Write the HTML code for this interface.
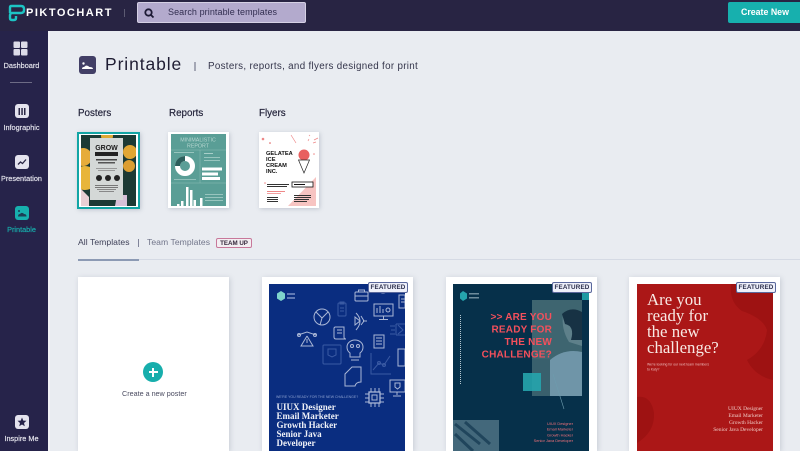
<!DOCTYPE html>
<html><head><meta charset="utf-8">
<style>
html,body{margin:0;padding:0;background:#e9ecf1}
body{width:800px;height:451px;overflow:hidden;position:relative;font-family:"Liberation Sans",sans-serif}
.a{position:absolute}
.t{position:absolute;white-space:nowrap}
.card{position:absolute;top:277px;width:151px;height:174px;background:#fff;box-shadow:1px 1px 5px rgba(120,130,150,.3)}
.badge{position:absolute;top:282px;width:38px;height:9px;background:#eef0fa;border:1px solid #5a689c;border-radius:2px;font:bold 6.300px/9px "Liberation Sans",sans-serif;color:#2a2d4a;text-align:center;letter-spacing:.15px}
.side{position:absolute;left:0;width:43px;text-align:center;font-size:7.300px;line-height:10px;color:#e8e8f0;white-space:nowrap;-webkit-text-stroke:.15px #e8e8f0}
.ic{position:absolute;width:14px;height:14px;background:#e4e3ee;border-radius:3px;left:15px}
svg.b{filter:blur(.35px)}
</style></head><body>
<div class="a" style="left:0;top:0;width:800px;height:31px;background:#282443"></div>
<div class="a" style="left:0;top:31px;width:48px;height:420px;background:#26234a"></div>
<div class="a" style="left:48px;top:31px;width:2px;height:420px;background:#f1f3f6"></div>

<svg class="a" style="left:8px;top:4px" width="18" height="18" viewBox="0 0 18 18" fill="none" stroke="#1dc4c4" stroke-width="2.400"><path d="M2 9V3.500Q2 2 3.500 2H13Q16 2 16 5V6Q16 9 13 9H4Q2 9 2 11.500V14Q2 16 4 16H6Q8 16 8 14V12"/></svg>
<div class="t" style="left:26px;top:5px;font:bold 11px/16px 'Liberation Sans',sans-serif;color:#fff;letter-spacing:1.5px">PIKTOCHART</div>
<div class="a" style="left:124px;top:9px;width:1px;height:8px;background:#5c5a72"></div>
<div class="a" style="left:137px;top:2px;width:169px;height:21px;box-sizing:border-box;background:#b3aacd;border:.5px solid #d5d0e4;border-radius:2px"></div>
<svg class="a" style="left:143px;top:7px" width="12" height="12" viewBox="0 0 12 12" fill="none" stroke="#1d1a35" stroke-width="1.800"><circle cx="5.500" cy="5.500" r="3.200"/><path d="M8 8l2.500 2.500"/></svg>
<div class="t" style="left:168px;top:5px;font-size:9px;line-height:14px;color:#322e50;letter-spacing:.08px">Search printable templates</div>
<div class="a" style="left:728px;top:2px;width:72px;height:21px;background:#17b0ae;border-radius:2px 0 0 2px"></div>
<div class="t" style="left:741px;top:5px;font:bold 8.800px/14px 'Liberation Sans',sans-serif;color:#fff">Create New</div>

<!-- sidebar -->
<svg class="a" style="left:13px;top:41px" width="15" height="15" viewBox="0 0 15 15"><g fill="#dcdbe8"><rect x="0.500" y="0.500" width="6.500" height="6.500" rx="1"/><rect x="8" y="0.500" width="6.500" height="6.500" rx="1"/><rect x="0.500" y="8" width="6.500" height="6.500" rx="1"/><rect x="8" y="8" width="6.500" height="6.500" rx="1"/></g></svg>
<div class="side" style="top:61px">Dashboard</div>
<div class="a" style="left:10px;top:82px;width:22px;height:1px;background:#6d6b85"></div>

<div class="ic" style="top:104px"></div>
<svg class="a" style="left:15px;top:104px" width="14" height="14" viewBox="0 0 14 14"><g fill="#2a2745"><rect x="3.500" y="4" width="1.500" height="7"/><rect x="6.300" y="4" width="1.500" height="7"/><rect x="9" y="4" width="1.500" height="7"/></g></svg>
<div class="side" style="top:123px">Infographic</div>

<div class="ic" style="top:155px"></div>
<svg class="a" style="left:15px;top:155px" width="14" height="14" viewBox="0 0 14 14" fill="none" stroke="#2a2745" stroke-width="1.300"><path d="M3 9.500L5.500 7L7.500 8.500L11 4.500"/></svg>
<div class="side" style="top:174px">Presentation</div>

<div class="ic" style="top:206px;background:#17b0ae"></div>
<svg class="a" style="left:15px;top:206px" width="14" height="14" viewBox="0 0 14 14"><path d="M3 10.500Q3 8 5 8L6 7Q8 6.500 9 8Q11.500 8 11.500 10.500Z" fill="#1c3d55"/><circle cx="4" cy="5" r="1" fill="#1c3d55"/></svg>
<div class="side" style="top:225px;color:#17b0ae;-webkit-text-stroke:.15px #17b0ae">Printable</div>

<div class="ic" style="top:415px"></div>
<svg class="a" style="left:15px;top:415px" width="14" height="14" viewBox="0 0 14 14"><path d="M7 2.500L8.300 5.600L11.500 5.800L9 8L9.800 11.200L7 9.500L4.200 11.200L5 8L2.500 5.800L5.700 5.600Z" fill="#26234a"/></svg>
<div class="side" style="top:434px">Inspire Me</div>

<!-- header -->
<div class="a" style="left:79px;top:56px;width:17px;height:18px;background:#423f66;border-radius:3px"></div>
<svg class="a" style="left:79px;top:56px" width="17" height="18" viewBox="0 0 17 18"><path d="M3 13Q3 11 5 11L7 9.500Q9 9.500 10.500 11Q14 11 14 13Z" fill="#fff"/><circle cx="4.500" cy="7.500" r="1.200" fill="#fff"/></svg>
<div class="t" style="left:105px;top:53px;font-size:17.500px;line-height:22px;color:#1f1d33;letter-spacing:.9px">Printable</div>
<div class="a" style="left:194px;top:62px;width:2px;height:9px;background:#a4a7b5"></div>
<div class="t" style="left:208px;top:60px;font-size:9.800px;line-height:14px;color:#33344a;letter-spacing:.31px">Posters, reports, and flyers designed for print</div>

<div class="t" style="left:78px;top:107px;font-size:9.800px;line-height:13px;color:#25253c;-webkit-text-stroke:.2px #25253c">Posters</div>
<div class="t" style="left:169px;top:107px;font-size:9.800px;line-height:13px;color:#25253c;-webkit-text-stroke:.2px #25253c">Reports</div>
<div class="t" style="left:259px;top:107px;font-size:9.800px;line-height:13px;color:#25253c;-webkit-text-stroke:.2px #25253c">Flyers</div>

<!-- Poster thumb -->
<div class="a" style="left:77px;top:132px;width:59px;height:73px;border:2px solid #12a5a5;background:#fff;box-shadow:1px 1px 4px rgba(120,130,150,.35)"></div>
<svg class="a b" style="left:81px;top:135px" width="55" height="71" viewBox="0 0 55 71">
<rect width="55" height="71" fill="#1c3a35"/>
<circle cx="4" cy="43" r="12" fill="#e8b53a"/><circle cx="2" cy="22" r="9" fill="#e6ac3a"/><circle cx="49" cy="17" r="7" fill="#e0a634"/><circle cx="48" cy="31" r="6" fill="#dc9e32"/><circle cx="26" cy="1" r="6" fill="#dca834"/>
<path d="M0 54L8 62V71H0Z" fill="#e8cfd4"/><path d="M36 60H46V71H34Z" fill="#d7c0d8"/>
<rect x="9" y="3" width="33" height="62" fill="#d4d8d7"/>
<text x="25.500" y="15" font-family="Liberation Sans" font-size="7" font-weight="bold" text-anchor="middle" fill="#1b1b1b">GROW</text>
<rect x="14" y="17" width="23" height="4" fill="#222"/>
<rect x="15" y="24" width="21" height="1.500" fill="#444"/><rect x="17" y="27" width="17" height="1.500" fill="#555"/>
<rect x="15" y="33" width="21" height="1" fill="#999"/><rect x="17" y="35" width="17" height="1" fill="#999"/>
<circle cx="18" cy="43" r="3" fill="#222"/><circle cx="27" cy="43" r="3" fill="#222"/><circle cx="36" cy="43" r="3" fill="#222"/>
<rect x="14" y="50" width="23" height="1" fill="#777"/><rect x="14" y="52" width="23" height="1" fill="#777"/><rect x="16" y="54" width="19" height="1" fill="#888"/><rect x="18" y="56" width="15" height="1" fill="#888"/>
</svg>

<!-- Report thumb -->
<div class="a" style="left:168px;top:132px;width:61px;height:76px;background:#fff;box-shadow:1px 1px 4px rgba(120,130,150,.35)"></div>
<svg class="a b" style="left:171px;top:134px" width="55" height="72" viewBox="0 0 55 72">
<rect width="55" height="72" fill="#5a9e96"/>
<text x="27" y="7.500" font-family="Liberation Sans" font-size="5.300" text-anchor="middle" fill="#b6d6d0">MINIMALISTIC</text>
<text x="27" y="13.500" font-family="Liberation Sans" font-size="5.300" text-anchor="middle" fill="#b6d6d0">REPORT</text>
<path d="M0 16H55M0 49H55M29 16V49" stroke="#8dbdb6" stroke-width=".5"/>
<circle cx="14" cy="32" r="7.500" fill="none" stroke="#fff" stroke-width="5"/>
<path d="M14 22A10 10 0 0 0 4 32H9A5 5 0 0 1 14 27Z" fill="#2c5f5c"/>
<g fill="#fff"><rect x="31" y="33.500" width="20" height="3"/><rect x="31" y="38.500" width="16" height="3"/><rect x="31" y="43" width="18" height="3"/></g>
<g fill="#a8cfc9"><rect x="33" y="19" width="9" height="1"/><rect x="33" y="23" width="16" height=".8"/><rect x="33" y="26" width="16" height=".8"/><rect x="3" y="18" width="20" height=".8"/><rect x="3" y="45" width="22" height=".7"/></g>
<g fill="#fff"><rect x="6" y="70" width="2.500" height="2"/><rect x="10" y="67" width="2.500" height="5"/><rect x="15" y="53" width="2.500" height="19"/><rect x="19" y="56" width="2.500" height="16"/><rect x="22.500" y="66" width="2.500" height="6"/><rect x="29" y="64" width="2.500" height="8"/></g>
<g fill="#a8cfc9"><rect x="34" y="60" width="18" height=".8"/><rect x="34" y="63" width="18" height=".8"/><rect x="34" y="66" width="18" height=".8"/></g>
</svg>

<!-- Flyer thumb -->
<div class="a" style="left:259px;top:132px;width:60px;height:76px;background:#fff;box-shadow:1px 1px 4px rgba(120,130,150,.35)"></div>
<svg class="a b" style="left:259px;top:132px" width="60" height="76" viewBox="0 0 60 76">
<path d="M57 45V74H29Z" fill="#f7c4c2"/>
<g font-family="Liberation Sans" font-size="5.700" font-weight="bold" fill="#111"><text x="7" y="23">GELATEA</text><text x="7" y="29">ICE</text><text x="7" y="35">CREAM</text><text x="7" y="41">INC.</text></g>
<circle cx="45" cy="23" r="5.500" fill="#e8605f"/>
<path d="M39.500 28H50.500L45 41Z" fill="#fff" stroke="#222" stroke-width=".7"/>
<path d="M32 3L37 11M50 3l1 1M49 9l1-2M55 8l4-2M54 11l3-1" stroke="#e88" stroke-width=".7"/>
<circle cx="4" cy="7" r="1.300" fill="#e88"/><circle cx="11" cy="11" r=".8" fill="#d55"/><circle cx="55" cy="22" r=".8" fill="#e88"/><circle cx="6" cy="51" r=".8" fill="#e88"/>
<rect x="33" y="50" width="21" height="5" fill="#fff" stroke="#111" stroke-width=".8"/><rect x="35" y="52" width="11" height="1" fill="#111"/>
<g fill="#333"><rect x="8" y="52" width="22" height="1"/><rect x="8" y="54" width="20" height="1"/><rect x="8" y="65" width="11" height="1"/><rect x="8" y="67" width="11" height="1"/><rect x="8" y="69" width="11" height="1"/><rect x="35" y="63" width="17" height="1"/><rect x="35" y="65" width="17" height="1"/><rect x="35" y="67" width="15" height="1"/><rect x="35" y="69" width="13" height="1"/></g>
<g fill="#e88"><rect x="8" y="59" width="18" height="1"/><rect x="8" y="61" width="14" height=".8"/></g>
</svg>

<!-- Tabs -->
<div class="t" style="left:78px;top:236px;font-size:8.600px;line-height:13px;color:#3e4058;letter-spacing:.05px">All Templates</div>
<div class="a" style="left:138px;top:239px;width:1px;height:8px;background:#80849a"></div>
<div class="t" style="left:147px;top:236px;font-size:8.600px;line-height:13px;color:#71758a;letter-spacing:.05px">Team Templates</div>
<div class="a" style="left:216px;top:238px;width:34px;height:8px;border:1px solid #c8789a;border-radius:2px;background:#f3eef2;font:bold 6.200px/9px 'Liberation Sans',sans-serif;color:#33263a;text-align:center">TEAM UP</div>
<div class="a" style="left:78px;top:259px;width:722px;height:1px;background:#d5dae4"></div>
<div class="a" style="left:78px;top:258.500px;width:61px;height:2px;background:#8c9ab4"></div>

<!-- Cards -->
<div class="card" style="left:78px"></div>
<div class="a" style="left:143px;top:362px;width:20px;height:20px;border-radius:50%;background:#17aeac"></div>
<div class="a" style="left:148.500px;top:371px;width:9px;height:2px;background:#fff"></div>
<div class="a" style="left:152px;top:367.500px;width:2px;height:9px;background:#fff"></div>
<div class="t" style="left:122px;top:388px;font-size:7.200px;line-height:11px;color:#4a4b60">Create a new poster</div>

<div class="card" style="left:262px"></div>
<svg class="a b" style="left:269px;top:284px" width="136" height="167" viewBox="0 0 136 167">
<rect width="136" height="167" fill="#0a2d80"/>
<path d="M12 7l4 2.500v5l-4 2.500l-4-2.500v-5z" fill="#7fd4cc"/>
<rect x="18" y="9" width="8" height="2" fill="#5f78b4"/><rect x="18" y="13" width="8" height="2" fill="#5f78b4"/>
<!-- dim icons -->
<g fill="none" stroke="#3a5aa3" stroke-width="1">
<rect x="69" y="19" width="8" height="13" rx="1"/><path d="M71 18h4v2h-4zM71 24h4M71 27h4"/>
<rect x="54" y="61" width="18" height="19" rx="1"/><path d="M59 65h8v6l-4 2l-4-2z"/>
<path d="M121 42h5M122 46h4M121 50h5M127 40h9M127 51h9M127 40v11M129 41l5 5l-5 4"/>
<path d="M102 69v21h20M104 86l6-7l5 2l6-9"/>
<circle cx="110" cy="79" r="1.500"/><circle cx="115" cy="81" r="1.500"/>
</g>
<!-- bright icons -->
<g fill="none" stroke="#aab7d6" stroke-width="1">
<rect x="86" y="8" width="13" height="9" rx="1"/><path d="M89.500 8V6h6v2M86 12h13"/>
<path d="M109 4a5 5 0 0 0 10 0"/>
<rect x="130" y="11" width="6" height="13"/><path d="M132 15h4M132 18h4"/>
<circle cx="53" cy="33" r="8"/><path d="M47 28L53 34L59 28M53 34L51 41"/>
<rect x="105" y="20" width="19" height="12"/><path d="M114.500 32v3M110 35.500h9M108 29v-5M111 29v-7M114 29v-4"/><circle cx="119" cy="26" r="2"/>
<path d="M87 29Q95 37 87 46M94 37h4M92 32l3 5l-3 4M86 33l5 4l-5 4z"/>
<path d="M66 43h9v10q0 2 2 2H67q-2 0-2-2v-9zM68 46h5M68 49h5"/>
<path d="M38 52L32 62H44L38 52M29 51L38 48L47 51M38 55v4"/><circle cx="30" cy="51" r="1.500"/><circle cx="46" cy="51" r="1.500"/>
<rect x="105" y="51" width="10" height="13"/><path d="M107 54h6M107 57h6M107 60h6"/>
<path d="M81 73v-4q-3-2-3-6a8 7 0 0 1 16 0q0 4-3 6v4zM82 76h8"/><circle cx="83" cy="62" r="1.500"/><circle cx="89" cy="62" r="1.500"/>
<rect x="129" y="65" width="7" height="17"/>
<path d="M83 83H92V98Q87 98 86 102H76V90Z"/>
<rect x="100" y="108" width="11" height="11" stroke-width="1.300"/><rect x="103" y="111" width="5" height="5"/><path d="M96 110h4M96 114h4M96 118h4M111 110h4M111 114h4M111 118h4M102 104v4M106 104v4M110 104v4M102 119v4M106 119v4M110 119v4"/>
<rect x="121" y="96" width="15" height="12"/><path d="M128 108v3M124 112h8M126 99h5v4l-2.500 2l-2.500-2z"/>
</g>
<text x="7" y="114" font-family="Liberation Sans" font-size="3.500" fill="#8ca0cf">WE'RE YOU READY FOR THE NEW CHALLENGE?</text>
<g font-family="Liberation Serif" font-size="9" font-weight="bold" fill="#f0f2f8">
<text x="7.500" y="126">UIUX Designer</text><text x="7.500" y="135">Email Marketer</text><text x="7.500" y="144">Growth Hacker</text><text x="7.500" y="153">Senior Java</text><text x="7.500" y="162">Developer</text></g>
</svg>
<div class="badge" style="left:368px">FEATURED</div>

<div class="card" style="left:446px"></div>
<svg class="a b" style="left:453px;top:284px" width="136" height="167" viewBox="0 0 136 167">
<rect width="136" height="167" fill="#06304a"/>
<path d="M10 7l4 2.500v5l-4 2.500l-3-2.500v-5z" fill="#25a4ad"/>
<rect x="16" y="9" width="10" height="1.500" fill="#6e8c9c"/><rect x="16" y="13" width="10" height="1.500" fill="#6e8c9c"/>
<rect x="79" y="16" width="50" height="96" fill="#3e6570"/>
<path d="M97 112V76q14-12 32-8v44z" fill="#6f95a8"/>
<path d="M79 75h18v37H79z" fill="#39606d"/>
<path d="M110 30Q120 26 129 30V62L116 58Q108 45 110 30Z" fill="#5e808a"/>
<path d="M109 30Q118 22 129 28V56H118Q122 42 112 40Z" fill="#173244"/>
<rect x="129" y="9" width="7" height="7" fill="#1e9aa3"/>
<rect x="70" y="89" width="18" height="18" fill="#26a5ad" opacity=".9"/>
<path d="M100 90l11 35" stroke="#6e9cae" stroke-width=".6"/>
<path d="M7.500 31V101" stroke="#b5c7d0" stroke-width="1" stroke-dasharray="1 1"/>
<rect x="0" y="136" width="46" height="31" fill="#43687b"/>
<path d="M2 140l25 20M12 138l25 22M2 150l18 17" stroke="#20455c" stroke-width="3"/>
<g font-family="Liberation Sans" font-size="10" font-weight="bold" fill="#f4505c" text-anchor="end" letter-spacing=".2">
<text x="99" y="36">&gt;&gt; ARE YOU</text><text x="99" y="48.500">READY FOR</text><text x="99" y="61">THE NEW</text><text x="99" y="73.500">CHALLENGE?</text></g>
<g font-family="Liberation Sans" font-size="3.900" fill="#f0717a" text-anchor="end"><text x="120" y="141">UIUX Designer</text><text x="120" y="146.500">Email Marketer</text><text x="120" y="152.500">Growth Hacker</text><text x="120" y="158">Senior Java Developer</text></g>
</svg>
<div class="badge" style="left:552px">FEATURED</div>

<div class="card" style="left:629px"></div>
<svg class="a b" style="left:637px;top:284px" width="136" height="167" viewBox="0 0 136 167">
<rect width="136" height="167" fill="#ab1717"/>
<path d="M94 0Q92 18 105 27Q126 34 130 46Q128 66 110 76Q118 92 136 96V0Z" fill="#9e1212"/>
<path d="M0 113Q14 111 17 129Q18 148 0 159Z" fill="#9e1212"/>
<g font-family="Liberation Serif" font-size="16.800" fill="#f8e9e4"><text x="10" y="21">Are you</text><text x="10" y="37">ready for</text><text x="10" y="53">the new</text><text x="10" y="69">challenge?</text></g>
<g font-family="Liberation Sans" font-size="3.400" fill="#eebebe"><text x="10" y="81.500">We're looking for our next team members</text><text x="10" y="86.500">to Katy?</text></g>
<g font-family="Liberation Serif" font-size="5.500" fill="#efc9c4" text-anchor="end"><text x="126" y="126">UIUX Designer</text><text x="126" y="133">Email Marketer</text><text x="126" y="140">Growth Hacker</text><text x="126" y="147">Senior Java Developer</text></g>
</svg>
<div class="badge" style="left:736px">FEATURED</div>
</body></html>
